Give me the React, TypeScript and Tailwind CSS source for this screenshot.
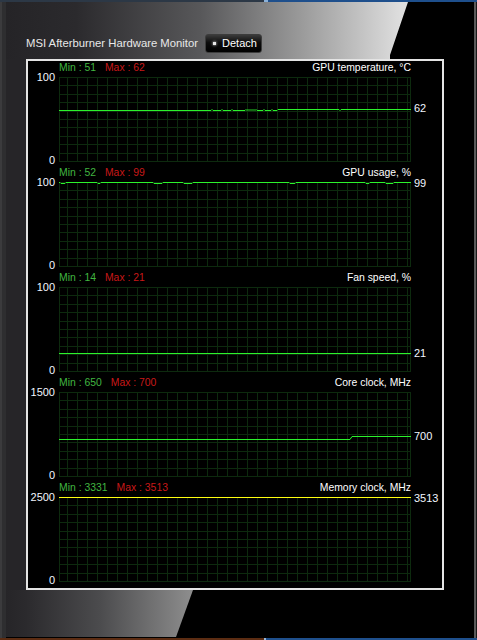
const FONT = { fontFamily: '"Liberation Sans", Arial, sans-serif' };

const GREEN = "#2cf22c";
const YELLOW = "#ffff10";

interface Graph {
  min: string;
  max: string;
  title: string;
  top: string;
  current: string;
  labelY: number;
  color: string;
  path: string;
}

const graphs: Graph[] = [
  {
    min: "51",
    max: "62",
    title: "GPU temperature, °C",
    top: "100",
    current: "62",
    labelY: 31,
    color: GREEN,
    path:
      "M0 33.5 H152 l1 -1 l1 1 H162 l1 -1 l1 1 H172 l1 -1 l1 1 H186 l1 -1 l1 1 l1 -1 l1 1 l1 -1 l1 1 l1 -1 l1 1 l1 -1 l1 1 l1 -1 l1 1 H204 l1 -1 l1 1 H212 l1 -1 l1 1 H218 l1 -1 H224 V32.5 H280 l1 1 l1 -1 H352",
  },
  {
    min: "52",
    max: "99",
    title: "GPU usage, %",
    top: "100",
    current: "99",
    labelY: 1,
    color: GREEN,
    path:
      "M0 0.5 H1 l1 1 H6 l1 -1 H38 l1 1 H41 l1 -1 H94 l1 1 H103 l1 -1 H124 l1 1 H133 l1 -1 H230 l1 1 H236 l1 -1 H306 l1 1 H310 l1 -1 H326 l1 1 H334 l1 -1 H352",
  },
  {
    min: "14",
    max: "21",
    title: "Fan speed, %",
    top: "100",
    current: "21",
    labelY: 66,
    color: GREEN,
    path: "M0 66.5 H352",
  },
  {
    min: "650",
    max: "700",
    title: "Core clock, MHz",
    top: "1500",
    current: "700",
    labelY: 44,
    color: GREEN,
    path: "M0 47.5 H291 L293 44.5 H352",
  },
  {
    min: "3331",
    max: "3513",
    title: "Memory clock, MHz",
    top: "2500",
    current: "3513",
    labelY: 1,
    color: YELLOW,
    path: "M0 0.5 H352",
  },
];

const vLines = [0, ...Array.from({ length: 35 }, (_, i) => 8 + i * 10), 351];
const hLines = Array.from({ length: 11 }, (_, i) => Math.round(i * 8.4));
const gridPath =
  vLines.map((x) => `M${x + 0.5} 0 V84.5`).join(" ") +
  " " +
  hLines.map((y) => `M0 ${y + 0.5} H352`).join(" ");

function GraphBlock({ g, first }: { g: Graph; first: boolean }) {
  return (
    <div className="flex flex-col">
      <div
        className={`flex items-end justify-between px-[31px] pb-[3px] text-[10.4px] leading-[12px] ${
          first ? "h-[16px]" : "h-[21px]"
        }`}
      >
        <div className="flex gap-[9px]">
          <span className="text-[#40b640]">Min : {g.min}</span>
          <span className="text-[#c81818]">Max : {g.max}</span>
        </div>
        <span className="text-white">{g.title}</span>
      </div>
      <div className="flex h-[84px]">
        <div className="flex w-[31px] flex-col items-end justify-between pr-[4px] text-[11px] leading-[12px] text-[#f2f6ff]">
          <span className="-mt-[6px]">{g.top}</span>
          <span className="-mb-[5px]">0</span>
        </div>
        <svg width={352} height={84} className="block overflow-visible">
          <path d={gridPath} stroke="#0d2a0e" strokeWidth={1} fill="none" />
          <path d={g.path} stroke={g.color} strokeWidth={1} fill="none" />
        </svg>
        <div className="relative w-[31px] text-[11px] leading-[12px] text-[#f2f6ff]">
          <span className="absolute left-[3px]" style={{ top: g.labelY - 6 }}>
            {g.current}
          </span>
        </div>
      </div>
    </div>
  );
}

export default function App() {
  return (
    <div className="flex h-[640px] w-[477px] flex-col bg-black" style={FONT}>
      <div className="flex h-[2px]">
        <div className="w-[264px] bg-[#2c3846]" />
        <div className="w-[4px] bg-[#8ab0d8]" />
        <div className="flex-1 bg-[#1e4f8c]" />
      </div>

      <div className="flex flex-1">
        <div className="w-[6px] border-l-2 border-[#3b3b3d] bg-[#2e2e30]" />

        <div className="flex flex-1 flex-col bg-black">
          <div className="flex h-[57px] items-end gap-[7px] bg-[linear-gradient(90deg,#252427_0px,#2b2a2d_70px,#58585a_195px,#9a9a9a_295px,#dedede_395px)] pb-[6px] pl-[20px] [clip-path:polygon(0_0,402px_0,384px_53px,384px_57px,0_57px)]">
            <span className="mb-[3px] text-[11.3px] leading-[13px] text-[#e8e8e8]">
              MSI Afterburner Hardware Monitor
            </span>
            <button className="flex h-[19px] w-[57px] items-center gap-[6px] rounded-[3px] border border-[#3c3c3c] bg-[linear-gradient(180deg,#3a3a3a_0%,#0c0c0c_45%,#000_100%)] pl-[7px] text-[11px] leading-[13px] text-white">
              <span className="h-[3px] w-[3px] bg-[#e8e8e8] shadow-[0_0_3px_#ffffff]" />
              Detach
            </button>
          </div>

          <div className="flex">
            <div className="w-[20px] bg-[#262528]" />
            <div className="flex h-[531px] w-[418px] flex-col border-2 border-[#e4e4e4] bg-black pb-[7px]">
              {graphs.map((g, i) => (
                <GraphBlock key={g.title} g={g} first={i === 0} />
              ))}
            </div>
            <div className="flex-1 bg-black" />
          </div>

          <div className="h-[47px] bg-[linear-gradient(90deg,#262528_0px,#2b2a2d_20px,#4c4c4e_95px,#8e8e8e_187px)] [clip-path:polygon(0_0,187px_0,170px_47px,0_47px)]" />
          <div className="h-[1px] bg-black" />
        </div>

        <div className="w-[3px] border-r border-[#1a1a1a] bg-[#5a5a5a]" />
      </div>

      <div className="flex h-[2px]">
        <div className="w-[264px] bg-[#5c2c12]" />
        <div className="w-[2px] bg-[#9ab8d8]" />
        <div className="flex-1 bg-[#1e4f8c]" />
      </div>
    </div>
  );
}
